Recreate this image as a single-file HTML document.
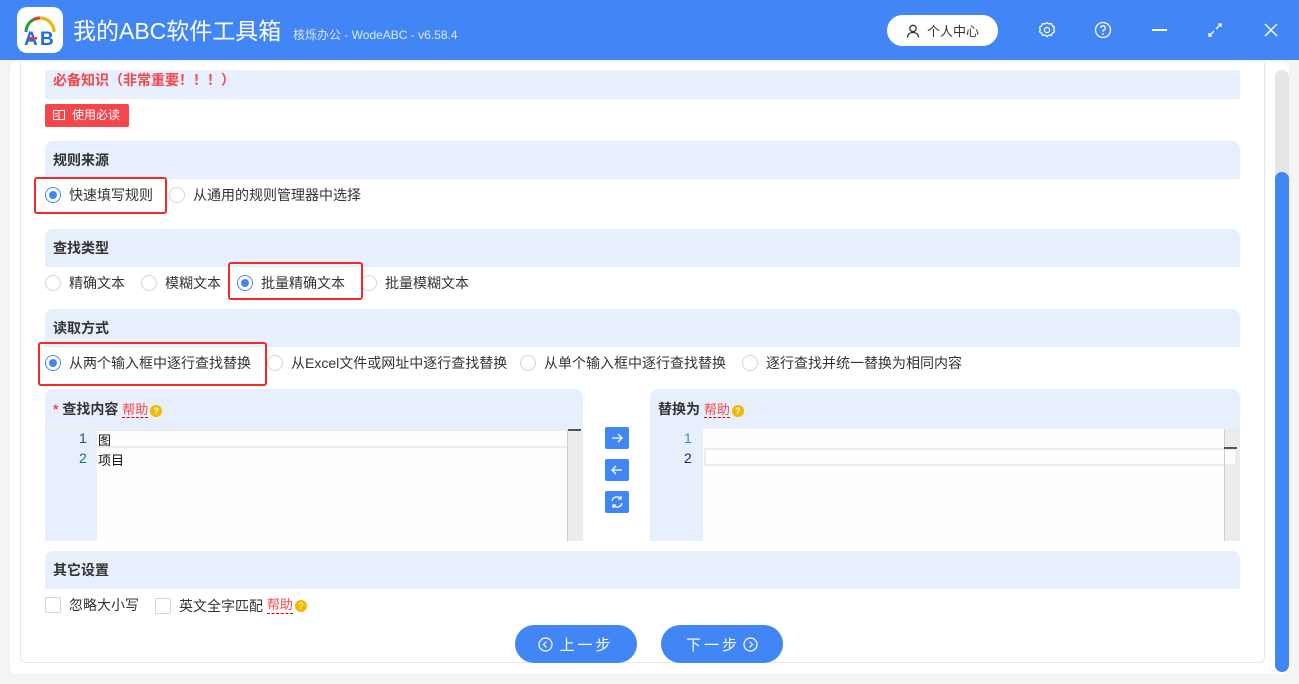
<!DOCTYPE html>
<html><head><meta charset="utf-8"><style>
*{margin:0;padding:0;box-sizing:border-box}
body{width:1299px;height:684px;overflow:hidden;background:#f4f4f4;font-family:"Liberation Sans","Noto Sans CJK SC",sans-serif;font-size:14px;color:#333;position:relative}
.a{position:absolute}
.hdr{left:0;top:0;width:1299px;height:60px;background:#4286f5}
.band{background:#e8effc;left:45px;width:1195px;border-radius:8px 8px 0 0}
.bt{position:absolute;font-weight:bold;font-size:14px;color:#333;line-height:16px}
.r{position:absolute;display:flex;align-items:center;font-size:14px;color:#333;line-height:16px}
.rc{width:16px;height:16px;border:1px solid #d5d5d5;border-radius:50%;margin-right:8px;background:#fff;position:relative;flex:none}
.rc.on{border-color:#4286f5}
.rc.on:after{content:"";position:absolute;left:3px;top:3px;width:8px;height:8px;border-radius:50%;background:#4286f5}
.box{border:2px solid #f02a2a;border-radius:3px;position:absolute}
.help{color:#f5474b;border-bottom:1px dashed #d00;font-weight:normal;font-size:13px}
.q{display:inline-block;width:12px;height:12px;border-radius:50%;background:#f3b800;color:#fff;font-size:9px;line-height:12px;text-align:center;vertical-align:0;margin-left:2px}
.ab{left:605px;width:24px;height:22px;background:#4286f5;border-radius:2px}
.btn{top:625px;height:38px;width:122px;background:#4286f5;border-radius:19px;color:#fff;font-size:15px;display:flex;align-items:center;justify-content:center;letter-spacing:3px}
.cb{width:16px;height:16px;border:1px solid #d5d5d5;border-radius:2px;margin-right:8px;background:#fff;flex:none}
</style></head><body>
<div class="a hdr"></div>
<div class="a" style="left:17px;top:7px;width:46px;height:46px;background:#fff;border-radius:10px"></div>
<svg class="a" style="left:17px;top:7px" width="46" height="46" viewBox="0 0 46 46">
<path d="M9 25 A14 14 0 0 1 37 25" fill="none" stroke="#2a9b3a" stroke-width="3"/>
<path d="M23 11 A14 14 0 0 1 37 25" fill="none" stroke="#f3b800" stroke-width="3"/>
<path d="M16 13 A14 14 0 0 1 23 11" fill="none" stroke="#e53935" stroke-width="3"/>
<text x="7" y="38" font-size="19" font-weight="bold" fill="#1e6fe0" font-family="Liberation Sans">A</text>
<text x="23" y="38" font-size="19" font-weight="bold" fill="#1e6fe0" font-family="Liberation Sans">B</text>
<rect x="12" y="30" width="8" height="2.5" fill="#e53935"/></svg>
<div class="a" style="left:73px;top:16px;color:#fff;font-size:23px;line-height:30px">我的ABC软件工具箱</div>
<div class="a" style="left:293px;top:26px;color:#dce8fd;font-size:12px">核烁办公 - WodeABC - v6.58.4</div>
<div class="a" style="left:887px;top:15px;width:111px;height:31px;background:#fff;border-radius:16px;display:flex;align-items:center;justify-content:center;font-size:13px;color:#333">
<svg width="14" height="14" viewBox="0 0 14 14" style="margin-right:7px"><circle cx="7" cy="4.5" r="3.2" fill="none" stroke="#333" stroke-width="1.3"/><path d="M1.5 13.5c0-3.5 2.5-5 5.5-5s5.5 1.5 5.5 5" fill="none" stroke="#333" stroke-width="1.3"/></svg>个人中心</div>
<svg class="a" style="left:1038px;top:21px" width="18" height="18" viewBox="0 0 18 18"><path d="M9 1.5l2 1.5 2.4-.4 1 2.2 2 1.4-.6 2.3.6 2.3-2 1.4-1 2.2-2.4-.4-2 1.5-2-1.5-2.4.4-1-2.2-2-1.4.6-2.3-.6-2.3 2-1.4 1-2.2 2.4.4z" fill="none" stroke="#fff" stroke-width="1.3"/><circle cx="9" cy="9" r="2.6" fill="none" stroke="#fff" stroke-width="1.3"/></svg>
<svg class="a" style="left:1094px;top:21px" width="18" height="18" viewBox="0 0 18 18"><circle cx="9" cy="9" r="7.5" fill="none" stroke="#fff" stroke-width="1.3"/><path d="M6.8 7a2.2 2.2 0 1 1 2.9 2.1c-.5.2-.7.6-.7 1.1v.6" fill="none" stroke="#fff" stroke-width="1.3"/><circle cx="9" cy="13" r=".9" fill="#fff"/></svg>
<div class="a" style="left:1152px;top:29px;width:15px;height:1.5px;background:#fff"></div>
<svg class="a" style="left:1208px;top:23px" width="14" height="14" viewBox="0 0 14 14"><path d="M8 6l5-5M10 1h3v3M6 8l-5 5M1 10v3h3" fill="none" stroke="#fff" stroke-width="1.3"/></svg>
<svg class="a" style="left:1264px;top:23px" width="14" height="14" viewBox="0 0 14 14"><path d="M1 1l12 12M13 1L1 13" stroke="#fff" stroke-width="1.4"/></svg>

<div class="a" style="left:10px;top:62px;width:1279px;height:612px;background:#fff;border-radius:6px"></div>
<div class="a" style="left:20px;top:62px;width:1245px;height:601px;border:1px solid #e8e8e8;border-top:none;border-radius:0 0 6px 6px"></div>
<div class="a" style="left:1275px;top:70px;width:14px;height:602px;background:#e6e6e6;border-radius:7px"></div>
<div class="a" style="left:1275px;top:172px;width:14px;height:500px;background:#4286f5;border-radius:7px"></div>

<div class="a band" style="top:70px;height:29px;border-radius:0"></div>
<div class="bt" style="left:53px;top:72px;color:#f5474b">必备知识（非常重要！！！）</div>
<div class="a" style="left:45px;top:104px;width:84px;height:23px;background:#f5474b;border-radius:2px;color:#fff;font-size:12px;line-height:23px;padding-left:27px">使用必读</div>
<svg class="a" style="left:53px;top:110px" width="12" height="10" viewBox="0 0 12 10"><rect x=".5" y=".5" width="11" height="9" fill="none" stroke="#fff"/><path d="M6 1v8M2 3.5h3M2 6h3" stroke="#fff"/></svg>

<div class="a band" style="top:141px;height:38px"></div>
<div class="bt" style="left:53px;top:152px">规则来源</div>
<div class="r" style="left:45px;top:187px"><span class="rc on"></span>快速填写规则</div>
<div class="r" style="left:169px;top:187px"><span class="rc"></span>从通用的规则管理器中选择</div>
<div class="box" style="left:34px;top:177px;width:133px;height:37px"></div>

<div class="a band" style="top:229px;height:38px"></div>
<div class="bt" style="left:53px;top:240px">查找类型</div>
<div class="r" style="left:45px;top:275px"><span class="rc"></span>精确文本</div>
<div class="r" style="left:141px;top:275px"><span class="rc"></span>模糊文本</div>
<div class="r" style="left:237px;top:275px"><span class="rc on"></span>批量精确文本</div>
<div class="r" style="left:361px;top:275px"><span class="rc"></span>批量模糊文本</div>
<div class="box" style="left:228px;top:262px;width:135px;height:38px"></div>

<div class="a band" style="top:309px;height:38px"></div>
<div class="bt" style="left:53px;top:320px">读取方式</div>
<div class="r" style="left:45px;top:355px"><span class="rc on"></span>从两个输入框中逐行查找替换</div>
<div class="r" style="left:267px;top:355px"><span class="rc"></span>从Excel文件或网址中逐行查找替换</div>
<div class="r" style="left:520px;top:355px"><span class="rc"></span>从单个输入框中逐行查找替换</div>
<div class="r" style="left:742px;top:355px"><span class="rc"></span>逐行查找并统一替换为相同内容</div>
<div class="box" style="left:38px;top:342px;width:229px;height:44px"></div>

<div class="a band" style="left:45px;width:538px;top:389px;height:40px"></div>
<div class="bt" style="left:53px;top:401px"><span style="color:#f5474b">*</span> 查找内容 <span class="help">帮助</span><span class="q">?</span></div>
<div class="a" style="left:45px;top:429px;width:538px;height:112px;background:#ececec"></div>
<div class="a" style="left:45px;top:431px;width:52px;height:110px;background:#e8effc"></div>
<div class="a" style="left:97px;top:431px;width:471px;height:110px;background:#fefefc"></div>
<div class="a" style="left:97px;top:446px;width:471px;height:2px;background:#ececec"></div>
<div class="a" style="left:567px;top:431px;width:1px;height:110px;background:#ccc"></div>
<div class="a" style="left:568px;top:429px;width:13px;height:2px;background:#555"></div>
<div class="a" style="left:79px;top:430px;font-size:14px;color:#1a4d8c">1</div>
<div class="a" style="left:79px;top:450px;font-size:14px;color:#1a6d8c">2</div>
<div class="a" style="left:98px;top:430px;font-size:13px;color:#111">图</div>
<div class="a" style="left:98px;top:450px;font-size:13px;color:#111">项目</div>

<div class="a ab" style="top:427px"></div>
<div class="a ab" style="top:459px"></div>
<div class="a ab" style="top:491px"></div>
<svg class="a" style="left:609px;top:430px" width="16" height="16" viewBox="0 0 16 16"><path d="M3 8h10M9 4l4 4-4 4" fill="none" stroke="#fff" stroke-width="1.3"/></svg>
<svg class="a" style="left:609px;top:462px" width="16" height="16" viewBox="0 0 16 16"><path d="M13 8H3M7 4L3 8l4 4" fill="none" stroke="#fff" stroke-width="1.3"/></svg>
<svg class="a" style="left:609px;top:494px" width="16" height="16" viewBox="0 0 16 16"><path d="M3 7a5 5 0 0 1 9-2M13 9a5 5 0 0 1-9 2M12 2v3h-3M4 14v-3h3" fill="none" stroke="#fff" stroke-width="1.3"/></svg>

<div class="a band" style="left:650px;width:590px;top:389px;height:40px"></div>
<div class="bt" style="left:658px;top:401px">替换为 <span class="help">帮助</span><span class="q">?</span></div>
<div class="a" style="left:650px;top:429px;width:590px;height:112px;background:#ececec"></div>
<div class="a" style="left:650px;top:429px;width:53px;height:112px;background:#e8effc"></div>
<div class="a" style="left:703px;top:429px;width:521px;height:112px;background:#fefefc"></div>
<div class="a" style="left:704px;top:448px;width:533px;height:18px;border:2px solid #ececec;background:#fefefc"></div>
<div class="a" style="left:1224px;top:429px;width:1px;height:112px;background:#ccc"></div>
<div class="a" style="left:1224px;top:447px;width:13px;height:2px;background:#555"></div>
<div class="a" style="left:684px;top:430px;font-size:14px;color:#3a8dc0">1</div>
<div class="a" style="left:684px;top:450px;font-size:14px;color:#1a2a80">2</div>

<div class="a band" style="top:551px;height:38px"></div>
<div class="bt" style="left:53px;top:562px">其它设置</div>
<div class="r" style="left:45px;top:597px"><span class="cb"></span>忽略大小写</div>
<div class="r" style="left:155px;top:597px"><span class="cb"></span>英文全字匹配&nbsp;<span class="help">帮助</span><span class="q">?</span></div>

<div class="a btn" style="left:515px"><svg width="15" height="15" viewBox="0 0 15 15" style="margin-right:6px"><circle cx="7.5" cy="7.5" r="6.5" fill="none" stroke="#fff" stroke-width="1.2"/><path d="M8.5 4.5l-3 3 3 3" fill="none" stroke="#fff" stroke-width="1.2"/></svg>上一步</div>
<div class="a btn" style="left:661px">下一步<svg width="15" height="15" viewBox="0 0 15 15" style="margin-left:3px"><circle cx="7.5" cy="7.5" r="6.5" fill="none" stroke="#fff" stroke-width="1.2"/><path d="M6.5 4.5l3 3-3 3" fill="none" stroke="#fff" stroke-width="1.2"/></svg></div>
</body></html>
